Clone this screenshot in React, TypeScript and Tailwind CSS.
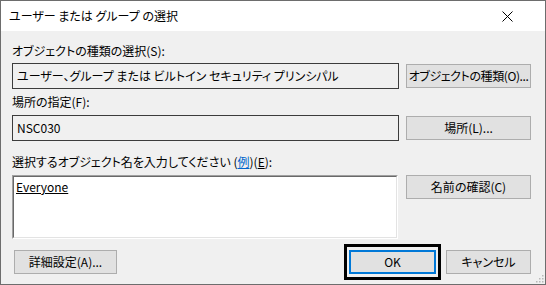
import React from "react";

const font = "font-['Noto_Sans_CJK_JP','Noto_Sans',sans-serif] [font-feature-settings:'palt']";

function Btn({ children, className = "" }: { children: React.ReactNode; className?: string }) {
  return (
    <div
      className={`flex h-[24px] shrink-0 items-center justify-center whitespace-nowrap border border-[#adadad] bg-[#e1e1e1] text-[12px] leading-none text-black ${className}`}
    >
      {children}
    </div>
  );
}

function ReadBox({ children }: { children: React.ReactNode }) {
  return (
    <div className="flex h-[26px] w-[387px] shrink-0 items-center whitespace-nowrap border border-[#3c3c3c] bg-[#f0f0f0] pl-[4px] text-[12px] leading-none text-black">
      {children}
    </div>
  );
}

export default function App() {
  return (
    <div className={`${font} flex h-[285px] w-[546px] flex-col border border-[#6d6d6d] bg-[#f0f0f0]`}>
      <div className="flex h-[30px] shrink-0 items-center justify-between bg-white pl-[8px] pr-[32px]">
        <span className="text-[12px] leading-none text-black">ユーザー または グループ の選択</span>
        <svg width="11" height="11" viewBox="0 0 11 11" className="mt-[1px]">
          <path d="M0.5 0.5 L10.5 10.5 M10.5 0.5 L0.5 10.5" stroke="#000" strokeWidth="1" fill="none" />
        </svg>
      </div>
      <div className="relative flex flex-1 flex-col pl-[11px] pr-[14px] pt-[13px]">
        <div className="h-[14px] text-[12px] leading-[14px] text-black">オブジェクトの種類の選択(S):</div>
        <div className="mt-[5px] flex items-center gap-[7px]">
          <ReadBox>ユーザー、グループ または ビルトイン セキュリティ プリンシパル</ReadBox>
          <Btn className="w-[125px] tracking-[-0.4px]">オブジェクトの種類(O)...</Btn>
        </div>
        <div className="mt-[6px] h-[14px] text-[12px] leading-[14px] text-black">場所の指定(F):</div>
        <div className="mt-[6px] flex items-center gap-[7px]">
          <ReadBox>NSC030</ReadBox>
          <Btn className="w-[125px]">場所(L)...</Btn>
        </div>
        <div className="mt-[14px] h-[14px] text-[12px] leading-[14px] text-black">
          選択するオブジェクト名を入力してください (
          <span className="text-[#0066cc] underline">例</span>)(<span className="underline">E</span>):
        </div>
        <div className="mt-[6px] flex items-start gap-[8px]">
          <div className="h-[64px] w-[386px] shrink-0 border border-b-white border-l-[#a0a0a0] border-r-white border-t-[#a0a0a0]">
            <div className="h-full w-full border border-b-[#e3e3e3] border-l-[#696969] border-r-[#e3e3e3] border-t-[#696969] bg-white pl-[2px] pt-[3px] text-[12px] leading-[14px] text-black">
              <span className="underline">Everyone</span>
            </div>
          </div>
          <Btn className="w-[125px]">名前の確認(C)</Btn>
        </div>
        <div className="mt-[11px] flex h-[24px] items-center">
          <Btn className="ml-[2px] w-[103px]">詳細設定(A)...</Btn>
          <div className="ml-auto mr-[5px] flex h-[36px] w-[97px] shrink-0 items-center justify-center border-[3px] border-black">
            <div className="flex h-[24px] w-[87px] items-center justify-center border-2 border-[#0078d7] bg-[#e1e1e1] text-[12px] leading-none text-black">
              OK
            </div>
          </div>
          <Btn className="w-[85px]">キャンセル</Btn>
        </div>
        <svg width="10" height="10" viewBox="0 0 10 10" className="absolute bottom-[1px] right-[1px]">
          {[
            [8, 2],
            [8, 5],
            [5, 5],
            [8, 8],
            [5, 8],
            [2, 8],
          ].map(([x, y], i) => (
            <rect key={i} x={x} y={y} width="1.5" height="1.5" fill="#b8b8b8" />
          ))}
        </svg>
      </div>
    </div>
  );
}
